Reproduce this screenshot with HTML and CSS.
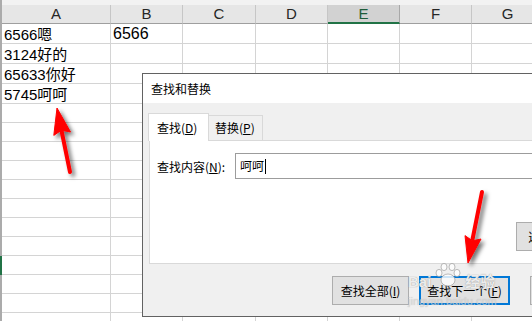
FILE: index.html
```html
<!DOCTYPE html>
<html lang="zh-CN">
<head>
    <meta charset="utf-8">
    <title>查找和替换</title>
    <link rel="stylesheet" href="styles.css">
</head>
<body>
    <div class="sheet" id="sheet"></div>

    <div class="dialog">
        <div class="dlg-title">查找和替换</div>
        <div class="dlg-body">
            <div class="tabs">
                <div class="tab active">查找(<u>D</u>)</div>
                <div class="tab">替换(<u>P</u>)</div>
            </div>
            <div class="panel">
                <div class="find-row">
                    <label class="find-label">查找内容(<u>N</u>):</label>
                    <div class="find-input">呵呵<span class="caret"></span></div>
                </div>
                <div class="opt-row">
                    <button class="btn" type="button">选项(<u>T</u>) &gt;&gt;</button>
                </div>
            </div>
            <div class="actions">
                <button class="btn btn-all" type="button">查找全部(<u>I</u>)</button>
                <button class="btn btn-next" type="button">查找下一个(<u>F</u>)</button>
                <button class="btn btn-close" type="button">关闭</button>
            </div>
        </div>
    </div>

    <div class="watermark">
        <div class="wm-top">
            <span>Bai</span>
            <svg class="paw" width="30" height="26" viewBox="0 0 30 26">
                <ellipse cx="15" cy="18" rx="7" ry="6"/>
                <ellipse cx="6" cy="11" rx="3" ry="3.6"/>
                <ellipse cx="11" cy="5" rx="3" ry="3.6"/>
                <ellipse cx="19" cy="5" rx="3" ry="3.6"/>
                <ellipse cx="24" cy="11" rx="3" ry="3.6"/>
            </svg>
            <span>经验</span>
        </div>
        <div class="wm-url">jingyan.baidu.com</div>
    </div>

    <svg class="arrows" width="532" height="321" viewBox="0 0 532 321">
        <defs>
            <filter id="shade" x="-50%" y="-50%" width="200%" height="200%">
                <feDropShadow dx="3" dy="3" stdDeviation="2" flood-color="#000" flood-opacity="0.55"/>
            </filter>
        </defs>
        <g filter="url(#shade)" fill="#f00" stroke="#f00">
            <line x1="70" y1="172" x2="61.6" y2="131" stroke-width="4" stroke-linecap="round"/>
            <polygon points="57,108 70.5,132 61.4,130.2 53.8,135.4" stroke-width="1" stroke-linejoin="round"/>
            <line x1="482" y1="192" x2="472.6" y2="239" stroke-width="4" stroke-linecap="round"/>
            <polygon points="468,263 481,239 472.4,240.8 465,235.6" stroke-width="1" stroke-linejoin="round"/>
        </g>
    </svg>

    <script type="text/javascript">
        var cols = ['A', 'B', 'C', 'D', 'E', 'F', 'G'];
        var data = [
            ['6566嗯', '6566'],
            ['3124好的'],
            ['65633你好'],
            ['5745呵呵']
        ];
        var sheet = document.getElementById('sheet');

        function addCell(cls, text) {
            var div = document.createElement('div');
            div.className = cls;
            if (text) div.textContent = text;
            sheet.appendChild(div);
        }

        addCell('stub');
        for (var c = 0; c < cols.length; c++) {
            addCell(cols[c] === 'E' ? 'hd sel' : 'hd', cols[c]);
        }

        for (var r = 0; r < 16; r++) {
            addCell(r === 12 ? 'stub active' : 'stub');
            var row = data[r] || [];
            for (var c = 0; c < cols.length; c++) {
                var cls = 'cell';
                if (r === 0 && c === 1) cls += ' big';
                addCell(cls, row[c]);
            }
        }
    </script>
</body>
</html>
```

FILE: styles.css
```css
body {
    margin: 0;
    width: 532px;
    height: 321px;
    overflow: hidden;
    position: relative;
    background-color: #fff;
    font-family: "Liberation Sans", "Noto Sans CJK SC", sans-serif;
}

/* spreadsheet */
.sheet {
    display: grid;
    grid-template-columns: 2px 109px 72px 73px 72px 72px 72px 72px;
    grid-template-rows: 24px repeat(4, 20px) repeat(12, 19px);
    background-color: #f2f2f2;
}
.stub {
    background-color: #ababab;
}
.stub.active {
    background-color: #217346;
}
.hd {
    align-self: end;
    height: 19px;
    box-sizing: border-box;
    background-color: #e6e6e6;
    border-right: 1px solid #c6c6c6;
    border-bottom: 1px solid #9f9f9f;
    color: #262626;
    font-size: 15px;
    line-height: 18px;
    text-align: center;
}
.hd.sel {
    background-color: #d2d2d2;
    border-bottom: 2px solid #217346;
    border-right-color: #a8a8a8;
    color: #1e5c3a;
    line-height: 17px;
}
.cell {
    display: flex;
    align-items: center;
    box-sizing: border-box;
    padding-left: 2px;
    background-color: #fff;
    border-right: 1px solid #d4d4d4;
    border-bottom: 1px solid #d4d4d4;
    color: #000;
    font-size: 15px;
    white-space: nowrap;
}
.cell.big {
    font-size: 16px;
}

/* dialog */
.dialog {
    position: absolute;
    left: 142px;
    top: 73px;
    width: 470px;
    height: 244px;
    box-sizing: border-box;
    border: 1px solid #626262;
    background-color: #f0f0f0;
    font-family: "Noto Sans CJK SC", sans-serif;
    font-size: 12px;
    color: #000;
}
.dlg-title {
    height: 29px;
    padding-left: 8px;
    line-height: 29px;
    background-color: #fff;
}
.dlg-body {
    padding: 10px 0 0 6px;
}
.tabs {
    display: flex;
    align-items: flex-start;
    height: 27px;
    position: relative;
    z-index: 1;
}
.tab {
    box-sizing: border-box;
    height: 25px;
    margin-top: 2px;
    width: 54px;
    padding-left: 6px;
    border: 1px solid #d9d9d9;
    border-left: none;
    border-bottom: none;
    line-height: 24px;
}
.tab.active {
    height: 28px;
    margin-top: 0;
    margin-left: -1px;
    width: 61px;
    padding-left: 8px;
    border-left: 1px solid #d9d9d9;
    background-color: #fff;
    line-height: 27px;
}
.panel {
    box-sizing: border-box;
    height: 124px;
    border: 1px solid #d9d9d9;
    background-color: #fff;
}
.find-row {
    display: flex;
    align-items: center;
    margin-top: 12px;
    padding-left: 7px;
}
.find-label {
    width: 78px;
}
.find-input {
    box-sizing: border-box;
    width: 320px;
    height: 26px;
    padding-left: 4px;
    border: 1px solid #9c9c9c;
    line-height: 24px;
    font-size: 12px;
}
.caret {
    display: inline-block;
    width: 1px;
    height: 15px;
    margin-left: 1px;
    vertical-align: -3px;
    background-color: #000;
}
.opt-row {
    margin-top: 43px;
    padding-left: 366px;
}
.btn {
    box-sizing: border-box;
    height: 29px;
    padding: 0;
    border: 1px solid #adadad;
    background-color: #e1e1e1;
    font-family: "Noto Sans CJK SC", sans-serif;
    font-size: 12px;
    color: #000;
}
.opt-row .btn {
    width: 80px;
}
.actions {
    display: flex;
    gap: 10px;
    margin-top: 12px;
    padding-left: 183px;
}
.btn-all {
    width: 77px;
}
.btn-next {
    width: 91px;
    border: 2px solid #0078d7;
}
.btn-close {
    width: 77px;
    margin-left: 10px;
}

/* watermark */
.watermark {
    position: absolute;
    left: 408px;
    top: 262px;
    color: rgba(255, 255, 255, 0.85);
    text-shadow: 0 0 1px rgba(120, 120, 120, 0.9);
    font-family: "Liberation Sans", "Noto Sans CJK SC", sans-serif;
}
.wm-top {
    display: flex;
    align-items: flex-end;
    gap: 2px;
    font-size: 15px;
    font-weight: bold;
    line-height: 17px;
}
.paw {
    fill: rgba(255, 255, 255, 0.8);
    stroke: rgba(150, 150, 150, 0.8);
    stroke-width: 0.8;
    margin-bottom: 2px;
}
.wm-url {
    font-size: 11px;
    line-height: 12px;
    margin-top: 5px;
    color: rgba(230, 230, 230, 0.6);
    text-shadow: 0 0 1px rgba(150, 150, 150, 0.6);
}

.arrows {
    position: absolute;
    left: 0;
    top: 0;
    pointer-events: none;
}
```
